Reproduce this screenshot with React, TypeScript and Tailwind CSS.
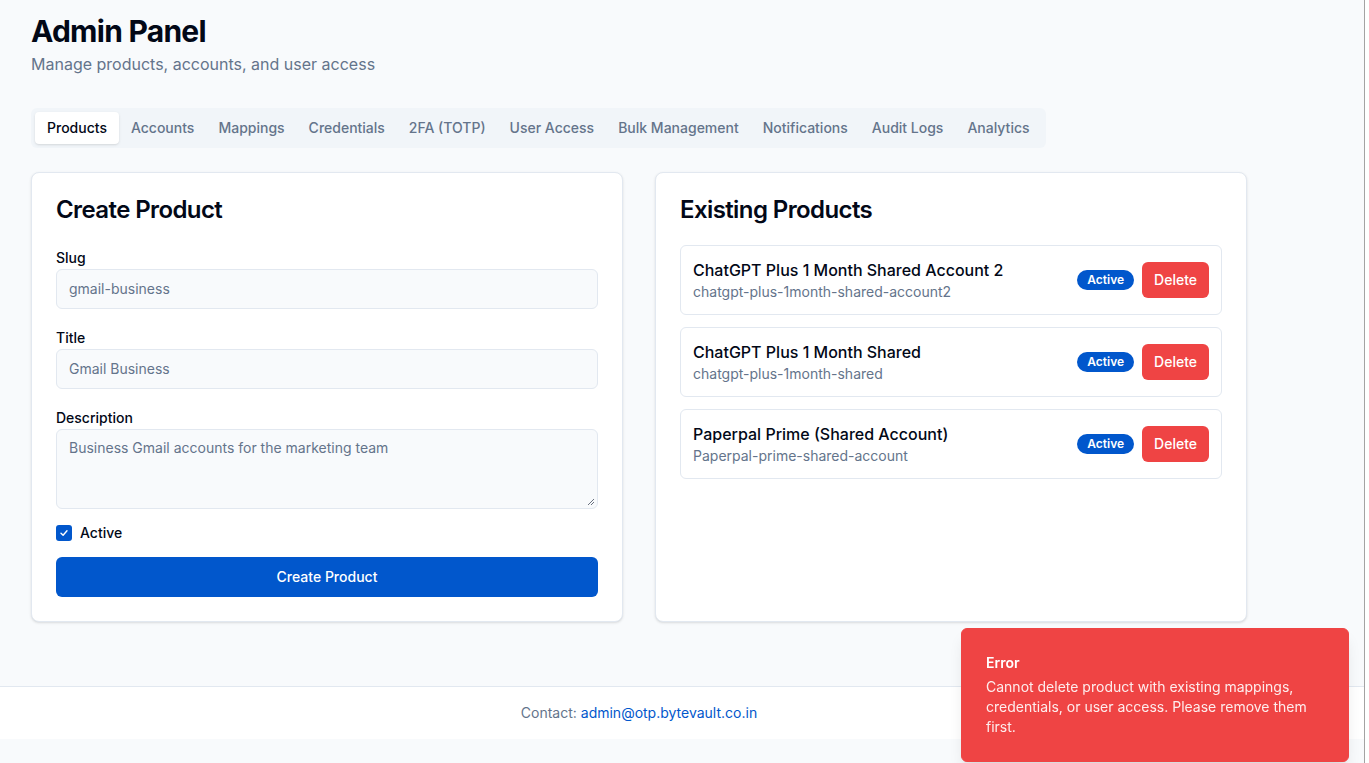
import React from "react";

const tabs = [
  "Products",
  "Accounts",
  "Mappings",
  "Credentials",
  "2FA (TOTP)",
  "User Access",
  "Bulk Management",
  "Notifications",
  "Audit Logs",
  "Analytics",
];

const products = [
  { title: "ChatGPT Plus 1 Month Shared Account 2", slug: "chatgpt-plus-1month-shared-account2" },
  { title: "ChatGPT Plus 1 Month Shared", slug: "chatgpt-plus-1month-shared" },
  { title: "Paperpal Prime (Shared Account)", slug: "Paperpal-prime-shared-account" },
];

export default function App() {
  return (
    <div
      className="flex min-h-screen w-[1369px] bg-white text-[#020817]"
      style={{ fontFamily: "Inter, 'Noto Sans', sans-serif" }}
    >
      <div className="flex w-[1364px] flex-col bg-[#f8fafc]">
        <main className="pl-[31px] pt-[13px] pb-[64px]">
          <div className="w-[1216px]">
            <h1 className="text-3xl font-bold leading-9 tracking-tight text-[#020817]">Admin Panel</h1>
            <p className="mt-[3px] text-base leading-6 text-[#64748b]">
              Manage products, accounts, and user access
            </p>

            <div className="mt-8 inline-flex h-10 items-center rounded-md bg-[#f1f5f9] p-1">
              {tabs.map((t, i) => (
                <div
                  key={t}
                  className={
                    i === 0
                      ? "rounded-sm bg-white px-3 py-1.5 text-sm font-medium leading-5 text-[#020817] shadow-sm"
                      : "px-3 py-1.5 text-sm font-medium leading-5 text-[#64748b]"
                  }
                >
                  {t}
                </div>
              ))}
            </div>

            <div className="mt-6 grid grid-cols-2 gap-8">
              {/* Create product */}
              <div className="rounded-lg border border-[#e2e8f0] bg-white px-6 pt-[25px] pb-6 shadow-sm">
                <h2 className="text-2xl font-semibold leading-6 tracking-tight">Create Product</h2>
                <div className="mt-[26px] flex flex-col gap-[19px]">
                  <div>
                    <div className="text-sm font-medium leading-5">Slug</div>
                    <div className="mt-px flex h-10 items-center rounded-md border border-[#e2e8f0] bg-[#f8fafc] px-3 text-sm text-[#64748b]">
                      gmail-business
                    </div>
                  </div>
                  <div>
                    <div className="text-sm font-medium leading-5">Title</div>
                    <div className="mt-px flex h-10 items-center rounded-md border border-[#e2e8f0] bg-[#f8fafc] px-3 text-sm text-[#64748b]">
                      Gmail Business
                    </div>
                  </div>
                  <div>
                    <div className="text-sm font-medium leading-5">Description</div>
                    <div className="relative mt-px h-20 rounded-md border border-[#e2e8f0] bg-[#f8fafc] px-3 py-2 text-sm leading-5 text-[#64748b]">
                      Business Gmail accounts for the marketing team
                      <svg className="absolute bottom-[2px] right-[2px]" width="8" height="8" viewBox="0 0 8 8">
                        <path d="M7 1L1 7M7 4L4 7" stroke="#6b7280" strokeWidth="1" />
                      </svg>
                    </div>
                  </div>
                </div>
                <div className="mt-4 flex h-4 items-center gap-2">
                  <div className="flex h-4 w-4 items-center justify-center rounded-[3px] bg-[#0157cc]">
                    <svg width="10" height="10" viewBox="0 0 10 10">
                      <path d="M2 5.2L4.1 7.2L8 2.8" stroke="white" strokeWidth="1.4" fill="none" strokeLinecap="round" strokeLinejoin="round" />
                    </svg>
                  </div>
                  <span className="text-sm font-medium">Active</span>
                </div>
                <button className="mt-4 flex h-10 w-full items-center justify-center rounded-md bg-[#0157cc] text-sm font-medium text-white">
                  Create Product
                </button>
              </div>

              {/* Existing products */}
              <div className="rounded-lg border border-[#e2e8f0] bg-white px-6 pt-[25px] pb-6 shadow-sm">
                <h2 className="text-2xl font-semibold leading-6 tracking-tight">Existing Products</h2>
                <div className="mt-[23px] flex flex-col gap-3">
                  {products.map((p) => (
                    <div
                      key={p.slug}
                      className="flex items-center justify-between rounded-md border border-[#e2e8f0] p-3"
                    >
                      <div>
                        <div className="text-base font-medium leading-6">{p.title}</div>
                        <div className="text-sm leading-5 text-[#64748b]">{p.slug}</div>
                      </div>
                      <div className="flex items-center gap-2">
                        <span className="rounded-full bg-[#0157cc] px-2.5 py-0.5 text-xs font-semibold leading-4 text-white">
                          Active
                        </span>
                        <button className="flex h-9 items-center rounded-md bg-[#ef4444] px-3 text-sm font-medium text-white">
                          Delete
                        </button>
                      </div>
                    </div>
                  ))}
                </div>
              </div>
            </div>
          </div>
        </main>

        <footer className="border-t border-[#e2e8f0] bg-white py-4">
          <div className="w-[1278px] text-center text-sm leading-5 text-[#64748b]">
            Contact: <span className="text-[#0157cc]">admin@otp.bytevault.co.in</span>
          </div>
        </footer>
      </div>
      <div className="w-px bg-[#a3a3a3]" />
      <div className="w-1 bg-white" />

      <div className="fixed bottom-px right-[20px] w-[388px] rounded-md border border-[#ef4444] bg-[#ef4444] p-6 text-white shadow-lg">
        <div className="text-sm font-semibold leading-5">Error</div>
        <div className="mt-1 text-sm leading-5 opacity-90">
          Cannot delete product with existing mappings, credentials, or user access. Please remove them first.
        </div>
      </div>
    </div>
  );
}
